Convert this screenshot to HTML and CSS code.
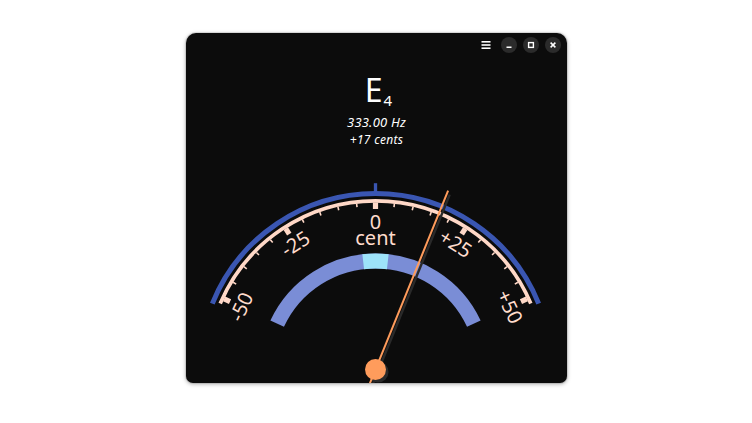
FILE: index.html
```html
<!DOCTYPE html>
<html>
<head>
<meta charset="utf-8">
<link rel="stylesheet" href="styles.css">
</head>
<body>
<div class="window">
  <div class="headerbar">
    <div class="menu-btn">
      <svg width="16" height="16" viewBox="0 0 16 16"><rect x="3.5" y="4" width="9" height="1.6" fill="#fff"/><rect x="3.5" y="7.2" width="9" height="1.6" fill="#fff"/><rect x="3.5" y="10.4" width="9" height="1.6" fill="#fff"/></svg>
    </div>
    <div class="win-btn">
      <svg width="16" height="16" viewBox="0 0 16 16"><rect x="5.5" y="9.5" width="5" height="1.5" fill="#fff"/></svg>
    </div>
    <div class="win-btn">
      <svg width="16" height="16" viewBox="0 0 16 16"><rect x="5.6" y="5.6" width="4.8" height="4.8" fill="none" stroke="#fff" stroke-width="1.4"/></svg>
    </div>
    <div class="win-btn">
      <svg width="16" height="16" viewBox="0 0 16 16"><path d="M5.6 5.6 L10.4 10.4 M10.4 5.6 L5.6 10.4" stroke="#fff" stroke-width="1.5"/></svg>
    </div>
  </div>
  <div class="note">E<span class="octave">4</span></div>
  <div class="freq">333.00 Hz</div>
  <div class="cents">+17 cents</div>
  <svg class="gauge" width="381" height="210" viewBox="-189.5 -196.5 381 210">
    <path d="M -163.18 -65.93 A 176 176 0 0 1 163.18 -65.93" fill="none" stroke="#3a56b2" stroke-width="5"/>
    <rect x="-1.65" y="-186.3" width="3.3" height="10" fill="#3a56b2"/>
    <path d="M -155.29 -65.92 A 168.7 168.7 0 0 1 155.29 -65.92" fill="none" stroke="#ffd8c7" stroke-width="3.7"/>
    <g fill="#ffd8c7">
      <rect x="-2.6" y="-167" width="5.2" height="6.5"/>
      <rect x="-2.6" y="-167" width="5.2" height="6.5" transform="rotate(32.5)"/>
      <rect x="-2.6" y="-167" width="5.2" height="6.5" transform="rotate(-32.5)"/>
      <rect x="-2.6" y="-167" width="5.2" height="6.5" transform="rotate(65)"/>
      <rect x="-2.6" y="-167" width="5.2" height="6.5" transform="rotate(-65)"/>
      <rect x="-0.8" y="-167" width="1.6" height="3.6" transform="rotate(6.5)"/>
      <rect x="-0.8" y="-167" width="1.6" height="3.6" transform="rotate(13)"/>
      <rect x="-0.8" y="-167" width="1.6" height="3.6" transform="rotate(19.5)"/>
      <rect x="-0.8" y="-167" width="1.6" height="3.6" transform="rotate(26)"/>
      <rect x="-0.8" y="-167" width="1.6" height="3.6" transform="rotate(39)"/>
      <rect x="-0.8" y="-167" width="1.6" height="3.6" transform="rotate(45.5)"/>
      <rect x="-0.8" y="-167" width="1.6" height="3.6" transform="rotate(52)"/>
      <rect x="-0.8" y="-167" width="1.6" height="3.6" transform="rotate(58.5)"/>
      <rect x="-0.8" y="-167" width="1.6" height="3.6" transform="rotate(-6.5)"/>
      <rect x="-0.8" y="-167" width="1.6" height="3.6" transform="rotate(-13)"/>
      <rect x="-0.8" y="-167" width="1.6" height="3.6" transform="rotate(-19.5)"/>
      <rect x="-0.8" y="-167" width="1.6" height="3.6" transform="rotate(-26)"/>
      <rect x="-0.8" y="-167" width="1.6" height="3.6" transform="rotate(-39)"/>
      <rect x="-0.8" y="-167" width="1.6" height="3.6" transform="rotate(-45.5)"/>
      <rect x="-0.8" y="-167" width="1.6" height="3.6" transform="rotate(-52)"/>
      <rect x="-0.8" y="-167" width="1.6" height="3.6" transform="rotate(-58.5)"/>
    </g>
    <g class="labels">
      <text x="0" y="0" transform="rotate(0) translate(0 -140.5)">0</text>
      <text x="0" y="-125">cent</text>
      <text x="0" y="0" transform="rotate(-32.5) translate(0 -142)">-25</text>
      <text x="0" y="0" transform="rotate(32.5) translate(0 -142)">+25</text>
      <text x="0" y="0" transform="rotate(-65) translate(0 -141)">-50</text>
      <text x="0" y="0" transform="rotate(65) translate(0 -141)">+50</text>
    </g>
    <path d="M -98.33 -45.85 A 108.5 108.5 0 0 1 98.33 -45.85" fill="none" stroke="#7a8dd6" stroke-width="15"/>
    <path d="M -12.28 -107.80 A 108.5 108.5 0 0 1 12.28 -107.80" fill="none" stroke="#9de3fa" stroke-width="15"/>
    <g transform="rotate(22.1)">
      <line x1="3" y1="25" x2="3" y2="-190" stroke="#2a2a2a" stroke-width="2.4"/>
    </g>
    <circle cx="2.5" cy="2.5" r="10.5" fill="#2a2a2a"/>
    <g transform="rotate(22.1)">
      <line x1="0" y1="25" x2="0" y2="-193" stroke="#ff9c5c" stroke-width="2"/>
    </g>
    <circle cx="0" cy="0" r="10.5" fill="#ff9c5c"/>
  </svg>
</div>
</body>
</html>
```

FILE: styles.css
```css
html, body {
  margin: 0;
  padding: 0;
  background: #ffffff;
}
body {
  width: 752px;
  height: 423px;
  overflow: hidden;
  font-family: "Noto Sans", "DejaVu Sans", sans-serif;
}
.window {
  margin: 33px 0 0 186px;
  width: 381px;
  height: 350px;
  background: #0c0c0c;
  border-radius: 10px 10px 7px 7px;
  overflow: hidden;
  display: flex;
  flex-direction: column;
  box-shadow: 0 1px 4px rgba(0, 0, 0, 0.35), 0 0 0 1px rgba(0, 0, 0, 0.08);
}
.headerbar {
  display: flex;
  justify-content: flex-end;
  align-items: center;
  padding: 4px 6px 0 0;
  height: 16px;
  gap: 6px;
}
.menu-btn {
  width: 16px;
  height: 16px;
  margin-right: 1px;
}
.menu-btn svg, .win-btn svg {
  display: block;
}
.win-btn {
  width: 16px;
  height: 16px;
  border-radius: 50%;
  background: #2b2b2b;
}
.note {
  margin-top: 18.5px;
  text-align: center;
  font-size: 32px;
  line-height: 36px;
  color: #ffffff;
  padding-left: 4px;
}
.octave {
  font-size: 15px;
  line-height: 0;
  vertical-align: -4px;
  margin-left: 1px;
}
.freq {
  margin-top: 7.25px;
  text-align: center;
  font-size: 13px;
  line-height: 15px;
  font-style: italic;
  letter-spacing: 0.2px;
  color: #ffffff;
}
.cents {
  margin-top: 1.9px;
  text-align: center;
  font-size: 12px;
  line-height: 15px;
  font-style: italic;
  letter-spacing: 0.3px;
  color: #ffffff;
}
.gauge {
  display: block;
  margin-top: auto;
  flex: none;
}
.labels text {
  font-family: "Noto Sans", sans-serif;
  font-size: 20px;
  fill: #ffdccc;
  text-anchor: middle;
}
```
